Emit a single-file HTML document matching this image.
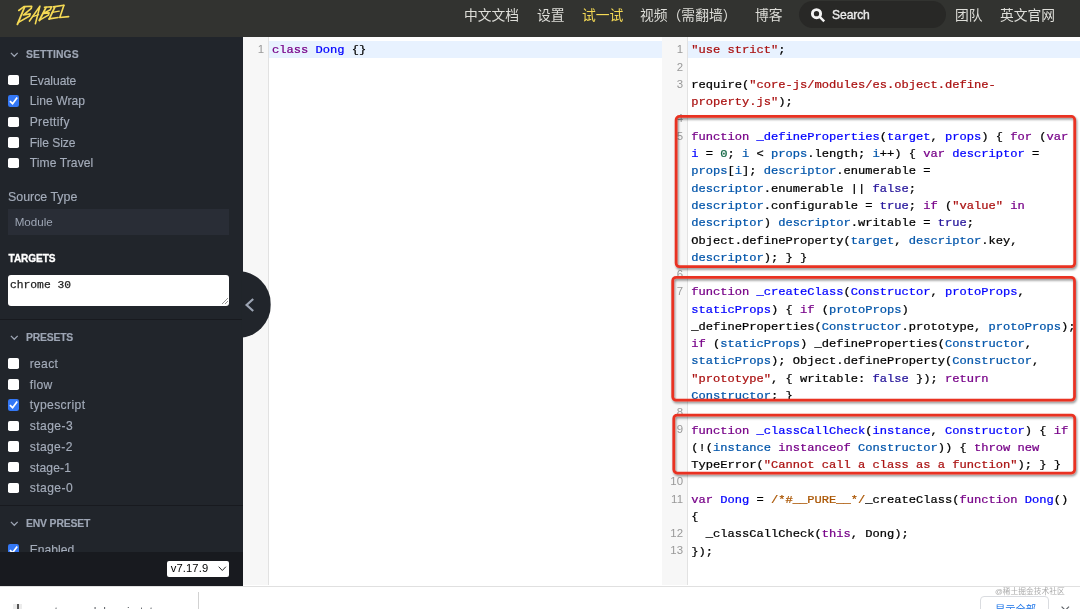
<!DOCTYPE html>
<html><head><meta charset="utf-8"><title>Babel REPL</title>
<style>
*{box-sizing:border-box;margin:0;padding:0}
html,body{width:1080px;height:609px;overflow:hidden;background:#fff;font-family:"Liberation Sans",sans-serif}
.abs,.cj{position:absolute}
#nav{position:absolute;left:0;top:0;width:1080px;height:36.6px;background:#323330}
#side{position:absolute;left:0;top:36.6px;width:242.7px;height:515.4px;background:#21252b;overflow:hidden}
#foot{position:absolute;left:0;top:552px;width:242.7px;height:33.6px;background:#181a1f;z-index:5}
.hd{position:absolute;left:25.5px;font-weight:bold;font-size:10.4px;color:#a3abb9;-webkit-text-stroke:.15px #a3abb9;letter-spacing:.1px;line-height:12px;white-space:nowrap}
.chev{position:absolute;left:9.5px}
.row{position:absolute;left:29.7px;font-size:12.1px;color:#a4acba;-webkit-text-stroke:.15px #a4acba;line-height:14px;white-space:nowrap}
.cb{position:absolute;left:8.3px;width:10.4px;height:10.4px;border-radius:1.8px;background:#fff}
.cb.on{background:#3478f6;left:7.9px;width:11.3px;height:11.4px;border-radius:2.2px}
.sep{position:absolute;left:0;width:243px;height:1px;background:#181a1f}
.code{position:absolute;font-family:"Liberation Mono",monospace;font-size:12.096px;line-height:17.28px;white-space:pre;color:#000;-webkit-text-stroke:.26px currentColor;transform:scaleY(.85);transform-origin:0 10.6px}
.ln{position:absolute;font-family:"Liberation Sans",sans-serif;font-size:10.4px;line-height:17.28px;color:#999;text-align:right;width:20px;transform:scaleX(1.1);transform-origin:100% 50%}
.k{color:#708}.d{color:#00f}.v2{color:#05a}.s{color:#a11}.n{color:#164}.a{color:#219}.c{color:#a50}
.gut{position:absolute;background:#f7f7f7;border-right:1px solid #e2e2e2}
.box{position:absolute;border:2.8px solid #e8301f;border-radius:5.5px;box-shadow:0.5px 1.5px 2px rgba(0,0,0,.45), inset 0.5px 1.5px 2px rgba(0,0,0,.35)}
#root{position:absolute;left:0;top:0;width:1080px;height:609px;overflow:hidden;will-change:transform}
</style></head><body><div id="root">

<div id="nav">
<svg class="cj" style="left:464.30px;top:6.00px" width="57.20" height="19.32" viewBox="0 -13.80 57.20 19.32"><text x="0" y="0" font-size="13.8" fill="#deded9" font-family="'Liberation Sans','Noto Sans CJK SC',sans-serif">中文文档</text></svg>
<svg class="cj" style="left:537.00px;top:6.00px" width="29.60" height="19.32" viewBox="0 -13.80 29.60 19.32"><text x="0" y="0" font-size="13.8" fill="#deded9" font-family="'Liberation Sans','Noto Sans CJK SC',sans-serif">设置</text></svg>
<svg class="cj" style="left:582.00px;top:6.00px" width="43.40" height="19.32" viewBox="0 -13.80 43.40 19.32"><text x="0" y="0" font-size="13.8" fill="#f5da55" font-family="'Liberation Sans','Noto Sans CJK SC',sans-serif">试一试</text></svg>
<svg class="cj" style="left:640.30px;top:6.00px" width="98.60" height="19.32" viewBox="0 -13.80 98.60 19.32"><text x="0" y="0" font-size="13.8" fill="#deded9" font-family="'Liberation Sans','Noto Sans CJK SC',sans-serif">视频（需翻墙）</text></svg>
<svg class="cj" style="left:755.00px;top:6.00px" width="29.60" height="19.32" viewBox="0 -13.80 29.60 19.32"><text x="0" y="0" font-size="13.8" fill="#deded9" font-family="'Liberation Sans','Noto Sans CJK SC',sans-serif">博客</text></svg>
<svg class="cj" style="left:955.20px;top:6.00px" width="29.60" height="19.32" viewBox="0 -13.80 29.60 19.32"><text x="0" y="0" font-size="13.8" fill="#deded9" font-family="'Liberation Sans','Noto Sans CJK SC',sans-serif">团队</text></svg>
<svg class="cj" style="left:999.70px;top:6.00px" width="57.20" height="19.32" viewBox="0 -13.80 57.20 19.32"><text x="0" y="0" font-size="13.8" fill="#deded9" font-family="'Liberation Sans','Noto Sans CJK SC',sans-serif">英文官网</text></svg>
<div class="abs" style="left:799px;top:0.6px;width:147.2px;height:27.7px;border-radius:14px;background:#282826"></div>
<svg class="abs" style="left:808px;top:5px" width="20" height="20" viewBox="808 5 20 20"><circle cx="816.5" cy="13.7" r="4.1" fill="none" stroke="#f4f4f4" stroke-width="2.9"/><path d="M819.5 16.7 L824.2 21.4" stroke="#f4f4f4" stroke-width="2.4"/></svg>
<div class="abs" style="left:832.1px;top:7.7px;font-size:12.1px;line-height:14px;color:#e8e8e8;letter-spacing:-0.123px;-webkit-text-stroke:.35px #f0f0f0">Search</div>
<svg class="abs" style="left:10px;top:0" width="70" height="30" viewBox="0 0 1080 463"><g fill="none" stroke="#f5da55" stroke-width="25" stroke-linecap="round" stroke-linejoin="round"><path d="M135 162 L215 103 L335 97 L328 130 L205 232 L312 214 L302 248 L130 345"/><path d="M224 112 L114 376" stroke-width="29"/><path d="M300 325 L462 95 L392 365"/><path d="M350 256 L442 226" stroke-width="20"/><path d="M556 114 L452 316" stroke-width="29"/><path d="M532 112 L642 104 L622 150 L512 208 L604 198 L592 234 L456 310"/><path d="M690 114 L604 296" stroke-width="28"/><path d="M668 106 L830 82"/><path d="M650 192 L760 172" stroke-width="21"/><path d="M604 292 L742 270"/><path d="M832 82 L768 270 L905 256"/></g></svg>
</div>
<div id="side">
<svg class="chev" style="top:15.2px" width="9" height="6" viewBox="0 0 9 6"><path d="M0.9 0.9 L4.3 4.3 L7.7 0.9" fill="none" stroke="#9da5b4" stroke-width="1.25"/></svg>
<div class="hd" style="top:12.7px;left:26px;color:#9da5b4;;letter-spacing:0.099px">SETTINGS</div>
<div class="cb" style="top:38.50px"></div>
<div class="row" style="letter-spacing:-0.061px;top:36.92px">Evaluate</div>
<div class="cb on" style="top:58.70px"><svg width="11.3" height="11.4" viewBox="0 0 11.3 11.4" style="display:block"><path d="M1.9 6.2 L4.6 8.7 L9.2 2.4" fill="none" stroke="#fff" stroke-width="1.7"/></svg></div>
<div class="row" style="letter-spacing:0.064px;top:57.62px">Line Wrap</div>
<div class="cb" style="top:79.95px"></div>
<div class="row" style="letter-spacing:0.306px;top:78.37px">Prettify</div>
<div class="cb" style="top:100.70px"></div>
<div class="row" style="letter-spacing:-0.077px;top:99.12px">File Size</div>
<div class="cb" style="top:121.40px"></div>
<div class="row" style="letter-spacing:0.087px;top:119.82px">Time Travel</div>
<div class="abs" style="left:8px;top:153.4px;font-size:12.4px;line-height:15px;color:#a4acba;-webkit-text-stroke:.15px #a4acba">Source Type</div>
<div class="abs" style="left:8px;top:172.4px;width:221px;height:26px;background:#292d36;color:#9da5b4;font-size:11.6px;line-height:26px;padding-left:6.7px">Module</div>
<div class="hd" style="top:216.2px;left:8.6px;color:#fff;font-size:10.1px;letter-spacing:-.1px;-webkit-text-stroke:.3px #fff">TARGETS</div>
<div class="abs" style="left:8px;top:238.9px;width:221px;height:30.3px;background:#fff;border-radius:3px;font-family:'Liberation Mono',monospace;font-size:11.3px;line-height:13px;color:#222;padding:3.5px 0 0 2px;-webkit-text-stroke:.25px #222">chrome 30</div>
<svg class="abs" style="left:221px;top:260.9px" width="8" height="8" viewBox="0 0 8 8"><path d="M1 7 L7 1 M4 7 L7 4" stroke="#777" stroke-width=".8"/></svg>
<div class="sep" style="top:282.9px"></div>
<svg class="chev" style="top:298.0px" width="9" height="6" viewBox="0 0 9 6"><path d="M0.9 0.9 L4.3 4.3 L7.7 0.9" fill="none" stroke="#9da5b4" stroke-width="1.25"/></svg>
<div class="hd" style="top:295.5px;left:26px;color:#9da5b4;;letter-spacing:-0.207px">PRESETS</div>
<div class="cb" style="top:321.80px"></div>
<div class="row" style="letter-spacing:0.340px;top:320.22px">react</div>
<div class="cb" style="top:342.60px"></div>
<div class="row" style="letter-spacing:0.371px;top:341.02px">flow</div>
<div class="cb on" style="top:362.80px"><svg width="11.3" height="11.4" viewBox="0 0 11.3 11.4" style="display:block"><path d="M1.9 6.2 L4.6 8.7 L9.2 2.4" fill="none" stroke="#fff" stroke-width="1.7"/></svg></div>
<div class="row" style="letter-spacing:0.402px;top:361.72px">typescript</div>
<div class="cb" style="top:384.10px"></div>
<div class="row" style="letter-spacing:0.435px;top:382.52px">stage-3</div>
<div class="cb" style="top:404.80px"></div>
<div class="row" style="letter-spacing:0.392px;top:403.22px">stage-2</div>
<div class="cb" style="top:425.50px"></div>
<div class="row" style="letter-spacing:0.164px;top:423.92px">stage-1</div>
<div class="cb" style="top:446.30px"></div>
<div class="row" style="letter-spacing:0.449px;top:444.72px">stage-0</div>
<div class="sep" style="top:468.4px"></div>
<svg class="chev" style="top:484.1px" width="9" height="6" viewBox="0 0 9 6"><path d="M0.9 0.9 L4.3 4.3 L7.7 0.9" fill="none" stroke="#9da5b4" stroke-width="1.25"/></svg>
<div class="hd" style="top:481.6px;left:26px;color:#9da5b4;;letter-spacing:-0.159px">ENV PRESET</div>
<div class="cb on" style="top:507.10px"><svg width="11.3" height="11.4" viewBox="0 0 11.3 11.4" style="display:block"><path d="M1.9 6.2 L4.6 8.7 L9.2 2.4" fill="none" stroke="#fff" stroke-width="1.7"/></svg></div>
<div class="row" style="letter-spacing:0.014px;top:506.02px">Enabled</div>
</div>
<div id="foot"><div class="abs" style="left:166.7px;top:9.1px;width:62.4px;height:15.6px;background:#fff;border-radius:2px;font-size:11.2px;letter-spacing:0.123px;line-height:15.6px;color:#000;padding-left:4px">v7.17.9</div><svg class="abs" style="left:218.4px;top:14.2px" width="9" height="6" viewBox="0 0 9 6"><path d="M0.7 0.7 L4.3 4.5 L7.9 0.7" fill="none" stroke="#222" stroke-width="1"/></svg></div>
<div class="abs" style="left:203.3px;top:270.5px;width:67.4px;height:67.4px;border-radius:50%;background:#21252b;clip-path:inset(0 0 0 38.6px);z-index:3"></div>
<svg class="abs" style="z-index:4;left:244px;top:296.5px" width="12" height="16" viewBox="0 0 12 16"><path d="M9.2 2 L2.6 8 L9.2 14" fill="none" stroke="#9da5b4" stroke-width="2.2"/></svg>
<div class="gut" style="left:242.6px;top:36.6px;width:26px;height:548.6999999999999px"></div>
<div class="abs" style="left:268.5px;top:40.6px;width:393.5px;height:17.28px;background:#e8f2ff"></div>
<div class="ln" style="left:243.9px;top:41.3px">1</div>
<div class="code" style="left:272px;top:42.45px"><span class="k">class</span> <span class="d">Dong</span> {}</div>
<div class="gut" style="left:662.2px;top:36.6px;width:25.5px;height:548.6999999999999px"></div>
<div class="abs" style="left:687.7px;top:40.6px;width:392.3px;height:17.28px;background:#e8f2ff"></div>
<div class="ln" style="left:663.4px;top:41.30px">1</div>
<div class="code" style="left:691.3px;top:42.45px"><span class="s">"use strict"</span>;</div>
<div class="ln" style="left:663.4px;top:58.58px">2</div>
<div class="ln" style="left:663.4px;top:75.86px">3</div>
<div class="code" style="left:691.3px;top:77.01px">require(<span class="s">"core-js/modules/es.object.define-</span></div>
<div class="code" style="left:691.3px;top:94.29px"><span class="s">property.js"</span>);</div>
<div class="ln" style="left:663.4px;top:110.42px">4</div>
<div class="ln" style="left:663.4px;top:127.70px">5</div>
<div class="code" style="left:691.3px;top:128.85px"><span class="k">function</span> <span class="d">_defineProperties</span>(<span class="d">target</span>, <span class="d">props</span>) { <span class="k">for</span> (<span class="k">var</span></div>
<div class="code" style="left:691.3px;top:146.13px"><span class="d">i</span> = <span class="n">0</span>; <span class="v2">i</span> &lt; <span class="v2">props</span>.length; <span class="v2">i</span>++) { <span class="k">var</span> <span class="d">descriptor</span> =</div>
<div class="code" style="left:691.3px;top:163.41px"><span class="v2">props</span>[<span class="v2">i</span>]; <span class="v2">descriptor</span>.enumerable =</div>
<div class="code" style="left:691.3px;top:180.69px"><span class="v2">descriptor</span>.enumerable || <span class="a">false</span>;</div>
<div class="code" style="left:691.3px;top:197.97px"><span class="v2">descriptor</span>.configurable = <span class="a">true</span>; <span class="k">if</span> (<span class="s">"value"</span> <span class="k">in</span></div>
<div class="code" style="left:691.3px;top:215.25px"><span class="v2">descriptor</span>) <span class="v2">descriptor</span>.writable = <span class="a">true</span>;</div>
<div class="code" style="left:691.3px;top:232.53px">Object.defineProperty(<span class="v2">target</span>, <span class="v2">descriptor</span>.key,</div>
<div class="code" style="left:691.3px;top:249.81px"><span class="v2">descriptor</span>); } }</div>
<div class="ln" style="left:663.4px;top:265.94px">6</div>
<div class="ln" style="left:663.4px;top:283.22px">7</div>
<div class="code" style="left:691.3px;top:284.37px"><span class="k">function</span> <span class="d">_createClass</span>(<span class="d">Constructor</span>, <span class="d">protoProps</span>,</div>
<div class="code" style="left:691.3px;top:301.65px"><span class="d">staticProps</span>) { <span class="k">if</span> (<span class="v2">protoProps</span>)</div>
<div class="code" style="left:691.3px;top:318.93px">_defineProperties(<span class="v2">Constructor</span>.prototype, <span class="v2">protoProps</span>);</div>
<div class="code" style="left:691.3px;top:336.21px"><span class="k">if</span> (<span class="v2">staticProps</span>) _defineProperties(<span class="v2">Constructor</span>,</div>
<div class="code" style="left:691.3px;top:353.49px"><span class="v2">staticProps</span>); Object.defineProperty(<span class="v2">Constructor</span>,</div>
<div class="code" style="left:691.3px;top:370.77px"><span class="s">"prototype"</span>, { writable: <span class="a">false</span> }); <span class="k">return</span></div>
<div class="code" style="left:691.3px;top:388.05px"><span class="v2">Constructor</span>; }</div>
<div class="ln" style="left:663.4px;top:404.18px">8</div>
<div class="ln" style="left:663.4px;top:421.46px">9</div>
<div class="code" style="left:691.3px;top:422.61px"><span class="k">function</span> <span class="d">_classCallCheck</span>(<span class="d">instance</span>, <span class="d">Constructor</span>) { <span class="k">if</span></div>
<div class="code" style="left:691.3px;top:439.89px">(!(<span class="v2">instance</span> <span class="k">instanceof</span> <span class="v2">Constructor</span>)) { <span class="k">throw</span> <span class="k">new</span></div>
<div class="code" style="left:691.3px;top:457.17px">TypeError(<span class="s">"Cannot call a class as a function"</span>); } }</div>
<div class="ln" style="left:663.4px;top:473.30px">10</div>
<div class="ln" style="left:663.4px;top:490.58px">11</div>
<div class="code" style="left:691.3px;top:491.73px"><span class="k">var</span> <span class="d">Dong</span> = <span class="c">/*#__PURE__*/</span>_createClass(<span class="k">function</span> <span class="d">Dong</span>()</div>
<div class="code" style="left:691.3px;top:509.01px">{</div>
<div class="ln" style="left:663.4px;top:525.14px">12</div>
<div class="code" style="left:691.3px;top:526.29px">  _classCallCheck(<span class="k">this</span>, Dong);</div>
<div class="ln" style="left:663.4px;top:542.42px">13</div>
<div class="code" style="left:691.3px;top:543.57px">});</div>
<svg class="abs" style="left:0;top:0;z-index:6" width="1080" height="609" viewBox="0 0 1080 609"><defs><filter id="ds" x="-5%" y="-5%" width="110%" height="115%"><feDropShadow dx="1" dy="1.7" stdDeviation="1.3" flood-color="#000" flood-opacity=".45"/></filter></defs><g fill="none" stroke="#e93323" stroke-width="2.75" filter="url(#ds)">
<rect x="676.1" y="116.45" width="398.60" height="150.25" rx="3.4" ry="3.4"/>
<rect x="672.7" y="277.3" width="401.80" height="122.90" rx="3.4" ry="3.4"/>
<rect x="673.75" y="415.0" width="400.95" height="58.00" rx="3.4" ry="3.4"/>
</g></svg>
<div class="abs" style="left:0;top:585.5px;width:1080px;height:23.5px;background:#fff;border-top:1px solid #e0e0e0"></div>
<div class="abs" style="left:198.2px;top:592px;width:1px;height:17px;background:#d2d2d2"></div>
<div class="abs" style="left:13.2px;top:603.8px;width:9px;height:6px;background:#ececec"></div><div class="abs" style="left:17.2px;top:603.8px;width:1.8px;height:6px;background:#555"></div>
<div class="abs" style="left:35.5px;top:605.2px;font-size:12px;line-height:14px;color:#5f6368;letter-spacing:.1px;white-space:nowrap">vector-module-min.txt</div>
<svg class="cj" style="left:995.30px;top:585.75px" width="71.33" height="10.85" viewBox="0 -7.75 71.33 10.85"><text x="0" y="0" font-size="7.75" fill="#9a9a9a" fill-opacity="0.85" font-family="'Liberation Sans','Noto Sans CJK SC',sans-serif">@稀土掘金技术社区</text></svg>
<div class="abs" style="left:980.3px;top:596px;width:69.2px;height:20px;border:1px solid #dadce0;border-radius:4px;background:#fff"></div>
<svg class="cj" style="left:994.60px;top:602.70px" width="43.20" height="14.42" viewBox="0 -10.30 43.20 14.42"><text x="0" y="0" font-size="10.3" fill="#1a73e8" font-family="'Liberation Sans','Noto Sans CJK SC',sans-serif">显示全部</text></svg>
<svg class="abs" style="left:1060px;top:604.5px" width="12" height="10" viewBox="0 0 12 10"><path d="M1.6 1.6 L9 9 M9 1.6 L1.6 9" stroke="#5f6368" stroke-width="1.2"/></svg>
</div></body></html>
